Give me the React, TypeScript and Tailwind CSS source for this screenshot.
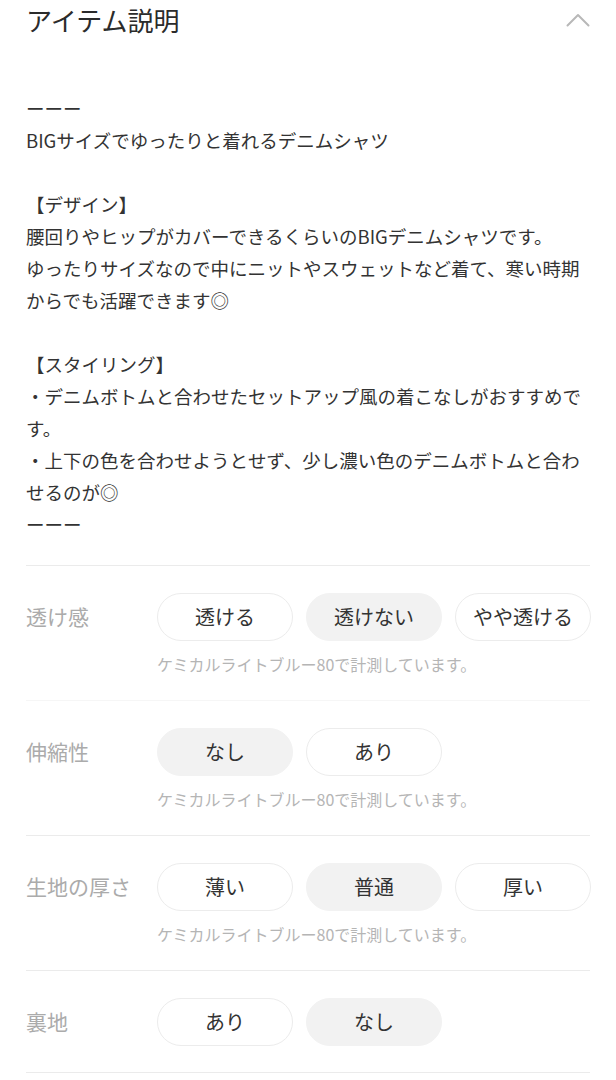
const description = `ーーー
BIGサイズでゆったりと着れるデニムシャツ

【デザイン】
腰回りやヒップがカバーできるくらいのBIGデニムシャツです。
ゆったりサイズなので中にニットやスウェットなど着て、寒い時期からでも活躍できます◎

【スタイリング】
・デニムボトムと合わせたセットアップ風の着こなしがおすすめです。
・上下の色を合わせようとせず、少し濃い色のデニムボトムと合わせるのが◎
ーーー`

interface Spec {
  label: string
  options: string[]
  selected: number
  note?: string
  faintTop?: boolean
}

const NOTE = 'ケミカルライトブルー80で計測しています。'

const specs: Spec[] = [
  { label: '透け感', options: ['透ける', '透けない', 'やや透ける'], selected: 1, note: NOTE },
  { label: '伸縮性', options: ['なし', 'あり'], selected: 0, note: NOTE, faintTop: true },
  { label: '生地の厚さ', options: ['薄い', '普通', '厚い'], selected: 1, note: NOTE },
  { label: '裏地', options: ['あり', 'なし'], selected: 1 },
]

function ChevronUp() {
  return (
    <svg width="24" height="14" viewBox="0 0 24 14" fill="none">
      <polyline points="1.5,12.5 12,2 22.5,12.5" stroke="#b8b8b8" strokeWidth="2" strokeLinecap="round" strokeLinejoin="round" />
    </svg>
  )
}

function SpecRow({ spec }: { spec: Spec }) {
  return (
    <div className={`border-t ${spec.faintTop ? 'border-[#f6f6f6]' : 'border-[#ebebeb]'} pt-[27px] pb-[26px]`}>
      <div className="flex items-center">
        <div className="w-[131px] shrink-0 text-[21px] text-[#ababab]">{spec.label}</div>
        <div className="flex gap-[13px]">
          {spec.options.map((opt, i) => (
            <div
              key={opt}
              className={`w-[136px] h-[48px] rounded-full flex items-center justify-center text-[20px] text-[#333] ${
                i === spec.selected ? 'bg-[#f2f2f2] border border-[#f2f2f2]' : 'bg-white border border-[#ececec]'
              }`}
            >
              {opt}
            </div>
          ))}
        </div>
      </div>
      {spec.note && (
        <p className="ml-[131px] mt-[13px] text-[16px] leading-[20px] text-[#b5b5b5]">{spec.note}</p>
      )}
    </div>
  )
}

export default function App() {
  return (
    <div
      className="w-[616px] min-h-[1080px] bg-white px-[26px]"
      style={{ fontFamily: '"Noto Sans CJK JP", "Noto Sans", sans-serif' }}
    >
      {/* Header */}
      <div className="h-[40px] flex items-center justify-between">
        <h2 className="text-[26px] font-normal text-[#2b2b2b] leading-none">アイテム説明</h2>
        <ChevronUp />
      </div>

      {/* Description */}
      <p className="mt-[52px] mb-[25px] whitespace-pre-wrap text-[18.5px] leading-[32px] text-[#333]">
        {description}
      </p>

      {/* Specs */}
      <div className="border-b border-[#ebebeb]">
        {specs.map((s) => (
          <SpecRow key={s.label} spec={s} />
        ))}
      </div>
    </div>
  )
}
